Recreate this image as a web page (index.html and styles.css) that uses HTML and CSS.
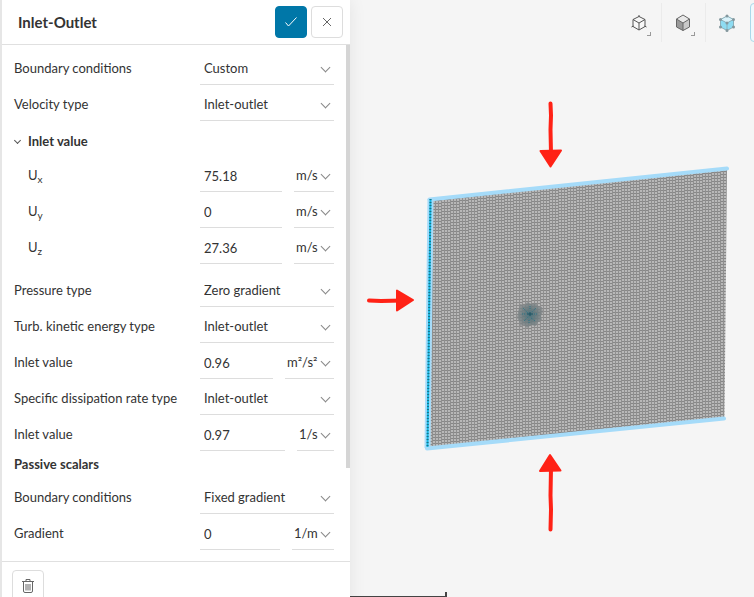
FILE: index.html
```html
<!DOCTYPE html>
<html lang="en">
<head>
    <meta charset="UTF-8">
    <meta name="viewport" content="width=device-width, initial-scale=1.0">
    <title>Inlet-Outlet</title>
    <link rel="stylesheet" href="styles.css">
</head>
<body>

    <div class="app">
        <form class="panel">
            <header class="panel-header">
                <h1>Inlet-Outlet</h1>
                <button type="submit" class="btn btn-primary" aria-label="Apply">
                    <svg width="14" height="12" viewBox="0 0 14 12"><path d="M1.5 6.5l3 3.5L12.500 1.500"/></svg>
                </button>
                <button type="button" class="btn" aria-label="Close">
                    <svg width="10" height="10" viewBox="0 0 10 10"><path d="M1 1l8 8M9 1l-8 8"/></svg>
                </button>
            </header>

            <div class="fields">
                <div class="row">
                    <label for="bc">Boundary conditions</label>
                    <span class="select"><select id="bc"><option>Custom</option></select></span>
                </div>
                <div class="row">
                    <label for="velocity">Velocity type</label>
                    <span class="select"><select id="velocity"><option>Inlet-outlet</option></select></span>
                </div>

                <details class="group" open>
                    <summary>Inlet value</summary>
                    <div class="row">
                        <label for="ux">U<sub>x</sub></label>
                        <span class="quantity">
                            <input type="text" id="ux" value="75.18">
                            <span class="select unit"><select aria-label="Unit"><option>m/s</option></select></span>
                        </span>
                    </div>
                    <div class="row">
                        <label for="uy">U<sub>y</sub></label>
                        <span class="quantity">
                            <input type="text" id="uy" value="0">
                            <span class="select unit"><select aria-label="Unit"><option>m/s</option></select></span>
                        </span>
                    </div>
                    <div class="row">
                        <label for="uz">U<sub>z</sub></label>
                        <span class="quantity">
                            <input type="text" id="uz" value="27.36">
                            <span class="select unit"><select aria-label="Unit"><option>m/s</option></select></span>
                        </span>
                    </div>
                </details>

                <div class="row">
                    <label for="pressure">Pressure type</label>
                    <span class="select"><select id="pressure"><option>Zero gradient</option></select></span>
                </div>
                <div class="row">
                    <label for="turb">Turb. kinetic energy type</label>
                    <span class="select"><select id="turb"><option>Inlet-outlet</option></select></span>
                </div>
                <div class="row">
                    <label for="turbValue">Inlet value</label>
                    <span class="quantity">
                        <input type="text" id="turbValue" value="0.96">
                        <span class="select unit"><select aria-label="Unit"><option>m²/s²</option></select></span>
                    </span>
                </div>
                <div class="row">
                    <label for="dissipation">Specific dissipation rate type</label>
                    <span class="select"><select id="dissipation"><option>Inlet-outlet</option></select></span>
                </div>
                <div class="row">
                    <label for="dissipationValue">Inlet value</label>
                    <span class="quantity">
                        <input type="text" id="dissipationValue" value="0.97">
                        <span class="select unit"><select aria-label="Unit"><option>1/s</option></select></span>
                    </span>
                </div>

                <h2>Passive scalars</h2>
                <div class="row">
                    <label for="scalarBc">Boundary conditions</label>
                    <span class="select"><select id="scalarBc"><option>Fixed gradient</option></select></span>
                </div>
                <div class="row">
                    <label for="gradient">Gradient</label>
                    <span class="quantity">
                        <input type="text" id="gradient" value="0">
                        <span class="select unit"><select aria-label="Unit"><option>1/m</option></select></span>
                    </span>
                </div>
                <div class="scroll-thumb"></div>
            </div>

            <footer class="panel-footer">
                <button type="button" class="btn" aria-label="Delete">
                    <svg width="12" height="14" viewBox="0 0 12 14"><path d="M0 2.500h12M4 2V.5h4V2M1.500 3v9q0 1.500 1.500 1.500h6q1.500 0 1.500-1.500V3M4 5v6.500M6 5v6.500M8 5v6.500"/></svg>
                </button>
            </footer>
        </form>

        <main class="viewport">
            <svg class="scene" viewBox="350 0 404 597" preserveAspectRatio="xMinYMin meet">
                <defs>
                    <!-- mesh rows step up one unit every three cells -->
                    <pattern id="mesh" width="27" height="3" patternUnits="userSpaceOnUse" shape-rendering="crispEdges">
                        <rect width="27" height="3" fill="#b8b8b8"/>
                        <path fill="#878787" d="M0 2h9v1H0zM9 1h9v1H9zM18 0h9v1h-9z"/>
                        <path fill="#8f8f8f" d="M0 0h1v3H0zM3 0h1v3H3zM6 0h1v3H6zM9 0h1v3H9zM12 0h1v3h-1zM15 0h1v3h-1zM18 0h1v3h-1zM21 0h1v3h-1zM24 0h1v3h-1z"/>
                    </pattern>
                    <radialGradient id="core">
                        <stop offset="0" stop-color="#4b747e"/>
                        <stop offset=".5" stop-color="#66797d" stop-opacity=".9"/>
                        <stop offset="1" stop-color="#7f8486" stop-opacity=".7"/>
                    </radialGradient>
                </defs>
                <path fill="url(#mesh)" d="M433 200L727 169L724.500 418L430 449z"/>
                <path d="M520 304l5 1 2-3 5 2 4-1 2 3 4 1 1 5-2 4 1 4-4 2-2 4-5-1-4 3-3-3-4 1-1-5-2-3 1-6z" fill="url(#core)"/>
                <path d="M523 308l5 5M536 308l-4 4M524 321l4-4M531 318l4 3M522 314h4M534 314h4M530 306v4M529 320v4" stroke="#2b7487" stroke-dasharray="1 1"/>
                <path d="M527 314h6M530 312v4" stroke="#1c5564"/>
                <path d="M429.500 199.500L727 168.500M427 448.500L724 418.500" fill="none" stroke="#a5dbf9" stroke-width="4" stroke-linecap="round"/>
                <path d="M430.500 199L427.500 448" stroke="#a5dbf9" stroke-width="6"/>
                <path d="M430.500 199L427.500 447" stroke="#16b5e0" stroke-width="2"/>
                <path d="M430.500 199L427.500 447" stroke="#16758b" stroke-width="2" stroke-dasharray="1 2"/>
                <g class="arrows">
                    <path d="M550.500 103.500l.5 12-.5 14 .5 24M369 300.500l12 .5 22-.5M550.500 529.500l.5-20-.5-14 .5-27"/>
                    <path d="M540.500 151l20.500-.5-10.500 16zM397 290.500v20l16-10.500zM540 471l20.500-.5-10.500-15.500z"/>
                </g>
            </svg>

            <div class="toolbar">
                <button type="button" class="tool" aria-label="Wireframe">
                    <svg width="16" height="18" viewBox="0 0 16 18">
                        <path d="M8 2.500l6 3v7L8 16l-6-3.500v-7zM2 5.500L8 9l6-3.500M8 9v7" fill="#f8f8f8" stroke="#555"/>
                        <path d="M8 1v2M.5 13l2-1M15.500 13l-2-1" stroke="#555"/>
                    </svg>
                    <span class="corner"></span>
                </button>
                <button type="button" class="tool" aria-label="Shaded">
                    <svg width="16" height="18" viewBox="0 0 16 18">
                        <path d="M8 1l6.500 4L8 9 1.500 5z" fill="#e8e8e8"/>
                        <path d="M1.500 5L8 9v7.500L1.500 13z" fill="#9a9a9a"/>
                        <path d="M14.500 5L8 9v7.500l6.500-3.500z" fill="#c9c9c9"/>
                        <path d="M8 1l6.500 4v8L8 16.500 1.500 13V5zM1.500 5L8 9l6.500-4M8 9v7.500" fill="none" stroke="#666"/>
                    </svg>
                    <span class="corner"></span>
                </button>
                <button type="button" class="tool" aria-label="Select volumes">
                    <svg width="18" height="18" viewBox="0 0 18 18">
                        <path d="M9 2l6.500 3.500v7.500L9 16.500 2.500 13V5.500z" fill="#8edcf2"/>
                        <path d="M9 2l6.500 3.500L9 9 2.500 5.500z" fill="#d8f2fa"/>
                        <path d="M9 2l6.500 3.500v7.500L9 16.500 2.500 13V5.500zM2.500 5.500L9 9l6.500-3.500M9 9v7" fill="none" stroke="#8ab0ba"/>
                        <path d="M9 2h0M15.500 5.500h0M15.500 13h0M9 16.500h0M2.500 13h0M2.500 5.500h0M9 9h0" stroke="#84979d" stroke-width="3" stroke-linecap="round"/>
                    </svg>
                </button>
                <button type="button" class="tool active" aria-label="Select faces"></button>
            </div>

            <div class="scale"></div>
        </main>
    </div>

</body>
</html>
```
FILE: styles.css
```css
* {
    margin: 0;
    padding: 0;
    box-sizing: border-box;
}

body {
    background-color: #f5f5f5;
    color: #333;
    font-family: Lato, "Liberation Sans", sans-serif;
    font-size: 13px;
    line-height: 20px;
}

.app {
    display: flex;
    height: 100vh;
    overflow: hidden;
}

.panel {
    flex: 0 0 350px;
    height: max-content;
    background-color: #fff;
    border-left: 2px solid #e6e6e6;
    box-shadow: 0 0 16px rgba(0, 0, 0, 0.08);
    z-index: 1;
}

.panel-header {
    display: flex;
    align-items: center;
    gap: 4px;
    padding: 6px 7px 6px 16px;
    border-bottom: 1px solid #e0e0e0;
}

h1 {
    flex: 1;
    font-size: 15px;
}

.btn {
    display: flex;
    align-items: center;
    justify-content: center;
    width: 32px;
    height: 32px;
    background-color: #fff;
    border: 1px solid #ddd;
    border-radius: 4px;
    cursor: pointer;
}

.btn svg {
    fill: none;
    stroke: #666;
}

.btn-primary {
    background-color: #0077a8;
    border-color: #0077a8;
}

.btn-primary svg {
    stroke: #fff;
}

.fields {
    position: relative;
    padding: 4px 16px 11px 12px;
}

.row {
    display: flex;
    align-items: center;
    height: 36px;
}

.row label {
    flex: 1;
    padding-top: 2px;
}

sub {
    font-size: 10px;
    line-height: 0;
    vertical-align: -3px;
}

.select {
    position: relative;
    display: block;
    width: 134px;
}

.select::after {
    content: "";
    position: absolute;
    top: 15px;
    right: 5px;
    width: 6px;
    height: 6px;
    border: solid #888;
    border-width: 0 1px 1px 0;
    transform: rotate(45deg);
    pointer-events: none;
}

select,
input {
    width: 100%;
    min-width: 0;
    height: 36px;
    padding: 2px 4px 0;
    background-color: transparent;
    border: none;
    border-bottom: 1px solid #ddd;
    border-radius: 0;
    color: #333;
    font: inherit;
    appearance: none;
    outline: none;
}

input {
    flex: 1;
    padding-top: 4px;
}

.quantity {
    display: flex;
    gap: 12px;
    width: 134px;
}

.unit {
    width: auto;
}

.unit select {
    padding: 2px 16px 0 2px;
}

.group {
    margin-bottom: 7px;
}

.group label {
    padding-left: 14px;
}

summary {
    display: flex;
    align-items: center;
    gap: 8px;
    height: 35px;
    padding: 5px 0 0;
    font-weight: bold;
    cursor: pointer;
}

summary::before {
    content: "";
    width: 4px;
    height: 4px;
    margin: 0 0 2px 1px;
    border: solid #555;
    border-width: 0 1px 1px 0;
    transform: rotate(45deg);
}

h2 {
    padding: 3px 0 4px;
    font-size: 13px;
    line-height: 20px;
}

.scroll-thumb {
    position: absolute;
    top: 0;
    right: 0;
    width: 4px;
    height: 82%;
    background-color: #d5d5d5;
}

.panel-footer {
    padding: 8px 10px;
    border-top: 1px solid #e0e0e0;
}

.viewport {
    position: relative;
    flex: 1;
    min-width: 0;
}

.scene {
    display: block;
    width: 100%;
}

.arrows {
    fill: #ff2216;
    stroke: #ff2216;
    stroke-width: 4;
    stroke-linecap: round;
    stroke-linejoin: round;
}

.arrows path:last-child {
    stroke-width: 2;
}

.toolbar {
    position: absolute;
    top: 3px;
    right: 0;
    display: flex;
    width: 136px;
    overflow: hidden;
}

.tool {
    position: relative;
    display: flex;
    flex: 0 0 44px;
    align-items: center;
    justify-content: center;
    height: 39px;
    padding-right: 2px;
    background-color: transparent;
    border: none;
    border-right: 1px solid #ebebeb;
    cursor: pointer;
}

.tool:nth-child(3) {
    border-right: none;
}

.tool.active {
    background-color: #f0f9fd;
    border: 1px solid #a9d9ea;
    border-radius: 4px;
}

.corner {
    position: absolute;
    right: 10px;
    bottom: 6px;
    width: 4px;
    height: 4px;
    border: solid #999;
    border-width: 0 1px 1px 0;
}

.scale {
    position: absolute;
    bottom: 0;
    left: 0;
    width: 97px;
    height: 5px;
    border: solid #444;
    border-width: 0 2px 1px 0;
}
```
